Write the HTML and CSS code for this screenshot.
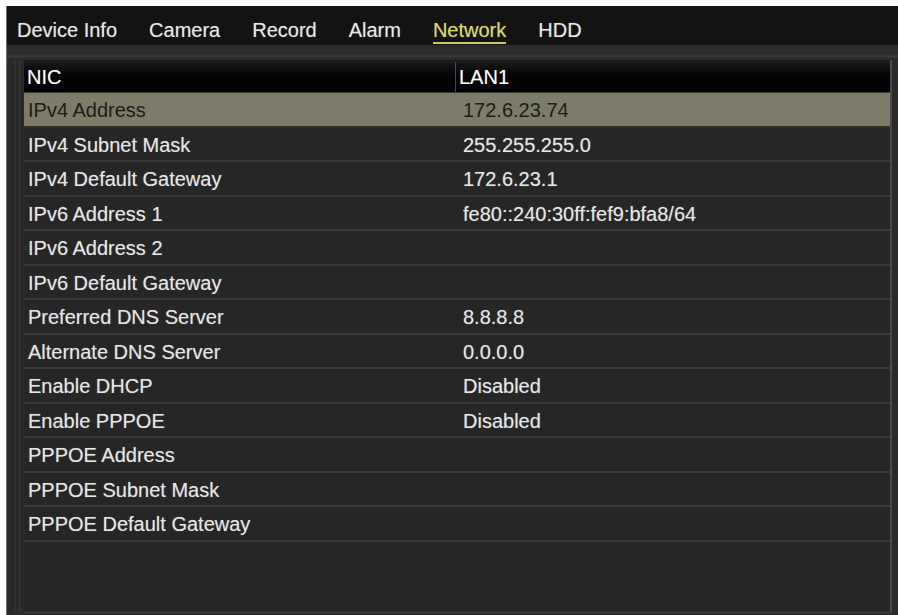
FILE: index.html
```html
<!DOCTYPE html>
<html lang="en">
<head>
    <meta charset="UTF-8">
    <meta name="viewport" content="width=device-width, initial-scale=1.0">
    <title>Network</title>
    <link rel="stylesheet" href="styles.css">
</head>
<body>
    <div class="screen">
        <div class="tabs">
            <span class="tab">Device Info</span>
            <span class="tab">Camera</span>
            <span class="tab">Record</span>
            <span class="tab">Alarm</span>
            <span class="tab active">Network</span>
            <span class="tab">HDD</span>
        </div>
        <div class="panel">
            <div class="list">
                <div class="head">
                    <div class="cell">NIC</div>
                    <div class="cell">LAN1</div>
                </div>
                <div class="row selected">
                    <div class="cell">IPv4 Address</div>
                    <div class="cell value">172.6.23.74</div>
                </div>
                <div class="row">
                    <div class="cell">IPv4 Subnet Mask</div>
                    <div class="cell value">255.255.255.0</div>
                </div>
                <div class="row">
                    <div class="cell">IPv4 Default Gateway</div>
                    <div class="cell value">172.6.23.1</div>
                </div>
                <div class="row">
                    <div class="cell">IPv6 Address 1</div>
                    <div class="cell value">fe80::240:30ff:fef9:bfa8/64</div>
                </div>
                <div class="row">
                    <div class="cell">IPv6 Address 2</div>
                    <div class="cell value"></div>
                </div>
                <div class="row">
                    <div class="cell">IPv6 Default Gateway</div>
                    <div class="cell value"></div>
                </div>
                <div class="row">
                    <div class="cell">Preferred DNS Server</div>
                    <div class="cell value">8.8.8.8</div>
                </div>
                <div class="row">
                    <div class="cell">Alternate DNS Server</div>
                    <div class="cell value">0.0.0.0</div>
                </div>
                <div class="row">
                    <div class="cell">Enable DHCP</div>
                    <div class="cell value">Disabled</div>
                </div>
                <div class="row">
                    <div class="cell">Enable PPPOE</div>
                    <div class="cell value">Disabled</div>
                </div>
                <div class="row">
                    <div class="cell">PPPOE Address</div>
                    <div class="cell value"></div>
                </div>
                <div class="row">
                    <div class="cell">PPPOE Subnet Mask</div>
                    <div class="cell value"></div>
                </div>
                <div class="row">
                    <div class="cell">PPPOE Default Gateway</div>
                    <div class="cell value"></div>
                </div>
            </div>
        </div>
    </div>
</body>
</html>
```

FILE: styles.css
```css
* {
    margin: 0;
    padding: 0;
    box-sizing: border-box;
}

body {
    background: #ffffff;
    font-family: 'Liberation Sans', Arial, sans-serif;
    font-size: 20px;
    color: #e6e6e6;
    padding: 6px 0 0 6px;
    overflow: hidden;
}

.screen {
    width: 892px;
    height: 609px;
    background: #2a2a2a;
    border-left: 1px solid #6e6e6e;
    display: flex;
    flex-direction: column;
    text-shadow: 0 0 1px rgba(255, 255, 255, 0.35);
}

/* top menu */
.tabs {
    height: 39px;
    background: #131313;
    display: flex;
    align-items: flex-end;
    gap: 32px;
    padding: 0 0 1px 10px;
}

.tab {
    line-height: 24px;
    border-bottom: 2px solid transparent;
    color: #e8e8e8;
}

.tab.active {
    color: #dcdc5c;
    border-bottom-color: #c8c860;
}

.panel {
    flex: 1;
    display: flex;
    padding: 15px 0 2px 17px;
    background: linear-gradient(#2c2c2c 0, #2c2c2c 10px, #3a3a3a 11px, #3a3a3a 12px, #2a2a2a 13px);
}

.list {
    width: 868px;
    background: #262626;
    border-right: 2px solid #4a4a4a;
    border-bottom: 1px solid #3c3c3c;
    box-shadow: -4px 0 0 #2a2a2a, -5px 0 0 #3a3a3a, -8px 0 0 #2a2a2a, -9px 0 0 #363636;
}

.head,
.row {
    display: grid;
    grid-template-columns: 431px 1fr;
    align-items: center;
}

.head {
    height: 33px;
    padding-top: 2px;
    background: linear-gradient(#1c1c1c, #050505 45%, #000000);
    color: #ffffff;
    border-bottom: 1px solid #3a3a3a;
}

.head .cell {
    padding-left: 3px;
}

.head .cell + .cell {
    border-left: 1px solid #4a4a4a;
    height: 100%;
    display: flex;
    align-items: center;
}

.row {
    height: 34.5px;
    padding-top: 3px;
    border-bottom: 2px solid #3a3a3a;
}

.row .cell {
    padding-left: 4px;
    white-space: nowrap;
}

.row .value {
    padding-left: 8px;
}

.row.selected {
    background: #7c7c68;
    color: #1c1c16;
    text-shadow: none;
    border-bottom-color: #2f2f28;
}
```
